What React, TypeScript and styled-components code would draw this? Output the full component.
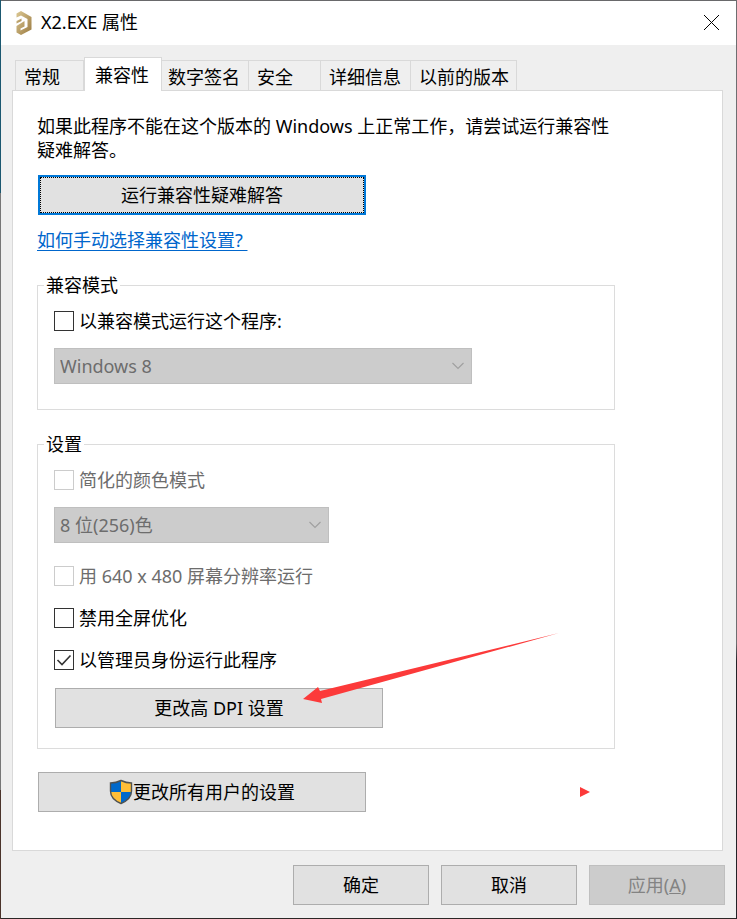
import React from "react";
import styled, { createGlobalStyle, css } from "styled-components";

const Global = createGlobalStyle`
  *, *::before, *::after { box-sizing: border-box; }
  html, body, #root { height: 100%; }
  body {
    margin: 0;
    background: #efefef;
    color: #000;
    font-family: "Noto Sans", "Noto Sans CJK SC", sans-serif;
    font-size: 18px;
    line-height: 24px;
    font-weight: 400;
  }
  button, select, input { font: inherit; margin: 0; border-radius: 0; }
`;

const Dialog = styled.main`
  position: relative;
  display: flex;
  flex-direction: column;
  min-height: 100%;
  background: #efefef;
  border: 1px solid;
  border-color: #69696b #69696b #2b2726 #69696b;
  &::before,
  &::after {
    content: "";
    position: absolute;
    top: -1px;
    bottom: -1px;
    width: 1px;
  }
  &::before {
    left: -1px;
    background: linear-gradient(#1b5870 21%, #777 21%, #777 86%, #4a332a 86%);
  }
  &::after {
    right: -1px;
    background: linear-gradient(#6e6e70 70%, #222126 72%);
  }
`;

const TitleBar = styled.header`
  display: flex;
  align-items: center;
  height: 44px;
  padding: 0 16px 0 14px;
  background: #fff;
`;

const Title = styled.h1`
  flex: 1;
  margin: 0 0 2px 7px;
  font-size: 18px;
  font-weight: inherit;
`;

const CloseButton = styled.button`
  display: flex;
  padding: 0;
  border: 0;
  background: none;
`;

const Body = styled.div`
  flex: 1;
  display: flex;
  flex-direction: column;
  padding: 12px 13px 0 11px;
`;

const Tabs = styled.div`
  display: flex;
  align-items: flex-end;
  padding-left: 3px;
`;

const Tab = styled.button<{ $width: number; $inset?: number; $active?: boolean; $first?: boolean }>`
  width: ${(p) => p.$width}px;
  height: 30px;
  padding: 3px 0 0 ${(p) => p.$inset ?? 8}px;
  text-align: left;
  white-space: nowrap;
  color: #000;
  background: #efefef;
  border: 1px solid #d9d9d9;
  border-bottom: 0;
  border-left-width: ${(p) => (p.$first ? 1 : 0)}px;
  ${(p) =>
    p.$active &&
    css`
      position: relative;
      height: 34px;
      margin-bottom: -1px;
      padding: 0 0 0 10px;
      background: #fff;
      border-left-width: 1px;
    `}
`;

const Panel = styled.section`
  flex: 1;
  padding: 23px 24px 38px;
  background: #fff;
  border: 1px solid #d9d9d9;
`;

const Content = styled.div`
  display: flex;
  flex-direction: column;
  align-items: flex-start;
  max-width: 578px;
`;

const Intro = styled.p`
  margin: 0;
`;

const Button = styled.button<{ $width: number }>`
  display: flex;
  align-items: center;
  justify-content: center;
  width: ${(p) => p.$width}px;
  max-width: 100%;
  height: 40px;
  padding: 0;
  color: #000;
  background: #e1e1e1;
  border: 1px solid #adadad;
  &:disabled {
    color: #838383;
    background: #ccc;
    border-color: #bfbfbf;
  }
`;

const DefaultButton = styled(Button)`
  margin: 13px 0 0 1px;
  border: 2px solid #0078d7;
  outline: 1px dotted #000;
  outline-offset: -3px;
`;

const HelpLink = styled.a`
  margin-top: 13px;
  color: #0066cc;
  white-space: pre;
  text-decoration: underline;
  text-decoration-thickness: 1px;
  text-underline-offset: 3px;
`;

const Group = styled.fieldset<{ $gap: number; $bottom: number }>`
  width: 100%;
  min-width: 0;
  margin: ${(p) => p.$gap}px 0 0;
  padding: 12px 16px ${(p) => p.$bottom}px;
  border: 1px solid #dcdcdc;
`;

const Legend = styled.legend`
  margin-left: -10px;
  padding: 0 2px;
`;

const Option = styled.label<{ $gap?: number; $disabled?: boolean }>`
  display: flex;
  align-items: center;
  gap: 5px;
  margin-top: ${(p) => p.$gap ?? 0}px;
  color: ${(p) => (p.$disabled ? "#6d6d6d" : "#000")};
`;

const BoxWrap = styled.span`
  display: grid;
  width: 20px;
  height: 20px;
  > * { grid-area: 1 / 1; }
  > svg { pointer-events: none; }
`;

const Box = styled.input`
  appearance: none;
  width: 20px;
  height: 20px;
  background: #fff;
  border: 1px solid #333;
  &:disabled { border-color: #ccc; }
  & + svg { visibility: hidden; }
  &:checked + svg { visibility: visible; }
`;

const SelectWrap = styled.div<{ $width: number }>`
  display: grid;
  align-items: center;
  width: ${(p) => p.$width}px;
  max-width: 100%;
  margin-top: 15px;
  > * { grid-area: 1 / 1; }
  > svg { justify-self: end; margin-right: 7px; pointer-events: none; }
`;

const Select = styled.select`
  appearance: none;
  width: 100%;
  height: 36px;
  padding: 0 28px 0 5px;
  color: #6d6d6d;
  opacity: 1;
  background: #ccc;
  border: 1px solid #bfbfbf;
`;

const Footer = styled.footer`
  display: flex;
  justify-content: flex-end;
  gap: 12px;
  padding: 14px 11px 13px;
`;

const Annotation = styled.svg`
  position: absolute;
  left: 302px;
  top: 631px;
  pointer-events: none;
`;

const Logo = () => (
  <svg width="19" height="26" viewBox="0 0 19 26" aria-hidden="true">
    <defs>
      <linearGradient id="gold" x1="0" y1="0" x2="1" y2="1">
        <stop offset="0" stopColor="#dcc894" />
        <stop offset="1" stopColor="#9a7a40" />
      </linearGradient>
    </defs>
    <path
      fill="url(#gold)"
      d="M1.500 3.500 6 1 16.500 7V19.500L6 25 1.500 22.500V16L9.500 11V16.500L5.500 18.500V20.500L12.500 17V9L6 5.500 1.500 7.500z"
    />
    <path fill="url(#gold)" d="M1.500 11 6.500 8.500V11L1.500 13.500z" />
  </svg>
);

const Check = () => (
  <svg width="20" height="20" viewBox="0 0 20 20" aria-hidden="true">
    <path d="M3.500 10 8 14.500 16.500 5.500" fill="none" stroke="#333" strokeWidth="1.600" />
  </svg>
);

const Chevron = () => (
  <svg width="14" height="8" viewBox="0 0 14 8" aria-hidden="true">
    <path d="M1.500 1 7 6.500 12.500 1" fill="none" stroke="#a0a0a0" strokeWidth="1.200" />
  </svg>
);

const shieldOutline =
  "M12 1.500C9 3 5 4 1.500 4V12C1.500 18 6 22 12 24.500 18 22 22.500 18 22.500 12V4C19 4 15 3 12 1.500z";

const Shield = () => (
  <svg width="24" height="26" viewBox="0 0 24 26" aria-hidden="true">
    <defs>
      <clipPath id="shield">
        <path d={shieldOutline} />
      </clipPath>
    </defs>
    <g clipPath="url(#shield)">
      <path fill="#0069cb" d="M0 0H12V13H0zM12 13H24V26H12z" />
      <path fill="#ffbe37" d="M12 0H24V13H12zM0 13H12V26H0z" />
    </g>
    <path d={shieldOutline} fill="none" stroke="#4f5252" strokeWidth="1.400" />
  </svg>
);

type CheckProps = { label: string; gap?: number; disabled?: boolean; checked?: boolean };

const CheckOption = ({ label, gap, disabled, checked }: CheckProps) => (
  <Option $gap={gap} $disabled={disabled}>
    <BoxWrap>
      <Box type="checkbox" disabled={disabled} defaultChecked={checked} />
      <Check />
    </BoxWrap>
    {label}
  </Option>
);

const DisabledSelect = ({ label, value, width }: { label: string; value: string; width: number }) => (
  <SelectWrap $width={width}>
    <Select aria-label={label} disabled>
      <option>{value}</option>
    </Select>
    <Chevron />
  </SelectWrap>
);

const DpiButton = styled(Button)`
  margin: 16px 0 0 1px;
`;

const AllUsersButton = styled(Button)`
  margin: 23px 0 0 1px;
`;

const tabs = [
  { label: "常规", width: 69 },
  { label: "兼容性", width: 78 },
  { label: "数字签名", width: 87, inset: 6 },
  { label: "安全", width: 72 },
  { label: "详细信息", width: 90 },
  { label: "以前的版本", width: 106 },
];

export default function App() {
  return (
    <>
      <Global />
      <Dialog>
        <TitleBar>
          <Logo />
          <Title>X2.EXE 属性</Title>
          <CloseButton aria-label="关闭">
            <svg width="18" height="18" viewBox="0 0 18 18" aria-hidden="true">
              <path d="M2 1 17 16M17 1 2 16" stroke="#000" strokeWidth="1" />
            </svg>
          </CloseButton>
        </TitleBar>
        <Body>
          <Tabs role="tablist">
            {tabs.map((t, i) => (
              <Tab
                key={t.label}
                role="tab"
                aria-selected={i === 1}
                $width={t.width}
                $inset={t.inset}
                $active={i === 1}
                $first={i === 0}
              >
                {t.label}
              </Tab>
            ))}
          </Tabs>
          <Panel>
            <Content>
              <Intro>如果此程序不能在这个版本的 Windows 上正常工作，请尝试运行兼容性疑难解答。</Intro>
              <DefaultButton $width={328}>运行兼容性疑难解答</DefaultButton>
              <HelpLink href="#help">{"如何手动选择兼容性设置? "}</HelpLink>
              <Group $gap={21} $bottom={25}>
                <Legend>兼容模式</Legend>
                <CheckOption label="以兼容模式运行这个程序:" />
                <DisabledSelect label="兼容模式" value="Windows 8" width={418} />
              </Group>
              <Group $gap={22} $bottom={20}>
                <Legend>设置</Legend>
                <CheckOption label="简化的颜色模式" disabled />
                <DisabledSelect label="颜色模式" value="8 位(256)色" width={275} />
                <CheckOption label="用 640 x 480 屏幕分辨率运行" gap={21} disabled />
                <CheckOption label="禁用全屏优化" gap={18} />
                <CheckOption label="以管理员身份运行此程序" gap={18} checked />
                <DpiButton $width={328}>更改高 DPI 设置</DpiButton>
              </Group>
              <AllUsersButton $width={328}>
                <Shield />
                更改所有用户的设置
              </AllUsersButton>
            </Content>
          </Panel>
        </Body>
        <Footer>
          <Button $width={136}>确定</Button>
          <Button $width={136}>取消</Button>
          <Button $width={136} disabled>
            <span>
              应用(<u>A</u>)
            </span>
          </Button>
        </Footer>
        <Annotation width="290" height="168" viewBox="0 0 290 168" aria-hidden="true">
          <path fill="#fc3a3a" d="M0 67 15 55 17 59 256 1 18 67 19 71z" />
          <path fill="#fc3a3a" d="M277 155 287 160 277 165z" />
        </Annotation>
      </Dialog>
    </>
  );
}
